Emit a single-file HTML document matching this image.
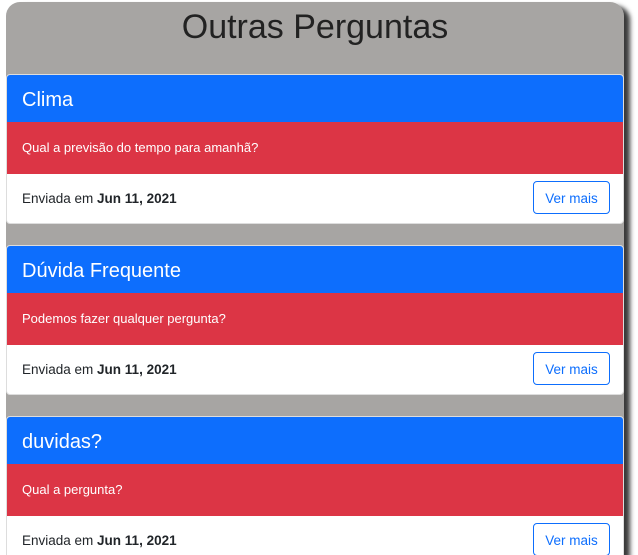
<!DOCTYPE html>
<html><head><style>
html,body{margin:0;width:638px;height:555px;overflow:hidden;background:#fff;font-family:"Liberation Sans",sans-serif;}
.wrap{position:absolute;left:6px;top:2px;width:618px;height:553px;background:#a7a5a3;border-radius:14px 14px 0 0;box-shadow:6px 4px 5px #3a3a3a;overflow:hidden;}
h1{margin:0;text-align:center;font-weight:normal;font-size:34px;color:#222;position:absolute;top:6px;width:100%;}
.card{position:absolute;left:0;width:618px;border:1px solid #ddd;border-radius:4px;overflow:hidden;background:#fff;box-sizing:border-box;}
.hd{background:#0d6efd;color:#fff;height:47px;line-height:50px;font-size:20px;padding-left:15px;}
.bd{background:#dc3545;color:#fff;height:52px;line-height:52px;font-size:13px;padding-left:15px;}
.ft{height:49px;line-height:49px;font-size:13.5px;color:#212529;padding-left:15px;position:relative;}
.btn{position:absolute;right:13px;top:7px;width:77px;height:33px;border:1px solid #0d6efd;border-radius:4px;color:#0d6efd;text-align:center;line-height:33px;font-size:13.5px;box-sizing:border-box;}
</style></head><body>
<div class="wrap">
<h1>Outras Perguntas</h1>
<div class="card" style="top:72px"><div class="hd">Clima</div><div class="bd">Qual a previsão do tempo para amanhã?</div><div class="ft">Enviada em <b>Jun 11, 2021</b><div class="btn">Ver mais</div></div></div>
<div class="card" style="top:243px"><div class="hd">Dúvida Frequente</div><div class="bd">Podemos fazer qualquer pergunta?</div><div class="ft">Enviada em <b>Jun 11, 2021</b><div class="btn">Ver mais</div></div></div>
<div class="card" style="top:414px"><div class="hd">duvidas?</div><div class="bd">Qual a pergunta?</div><div class="ft">Enviada em <b>Jun 11, 2021</b><div class="btn">Ver mais</div></div></div>
</div>
</body></html>
